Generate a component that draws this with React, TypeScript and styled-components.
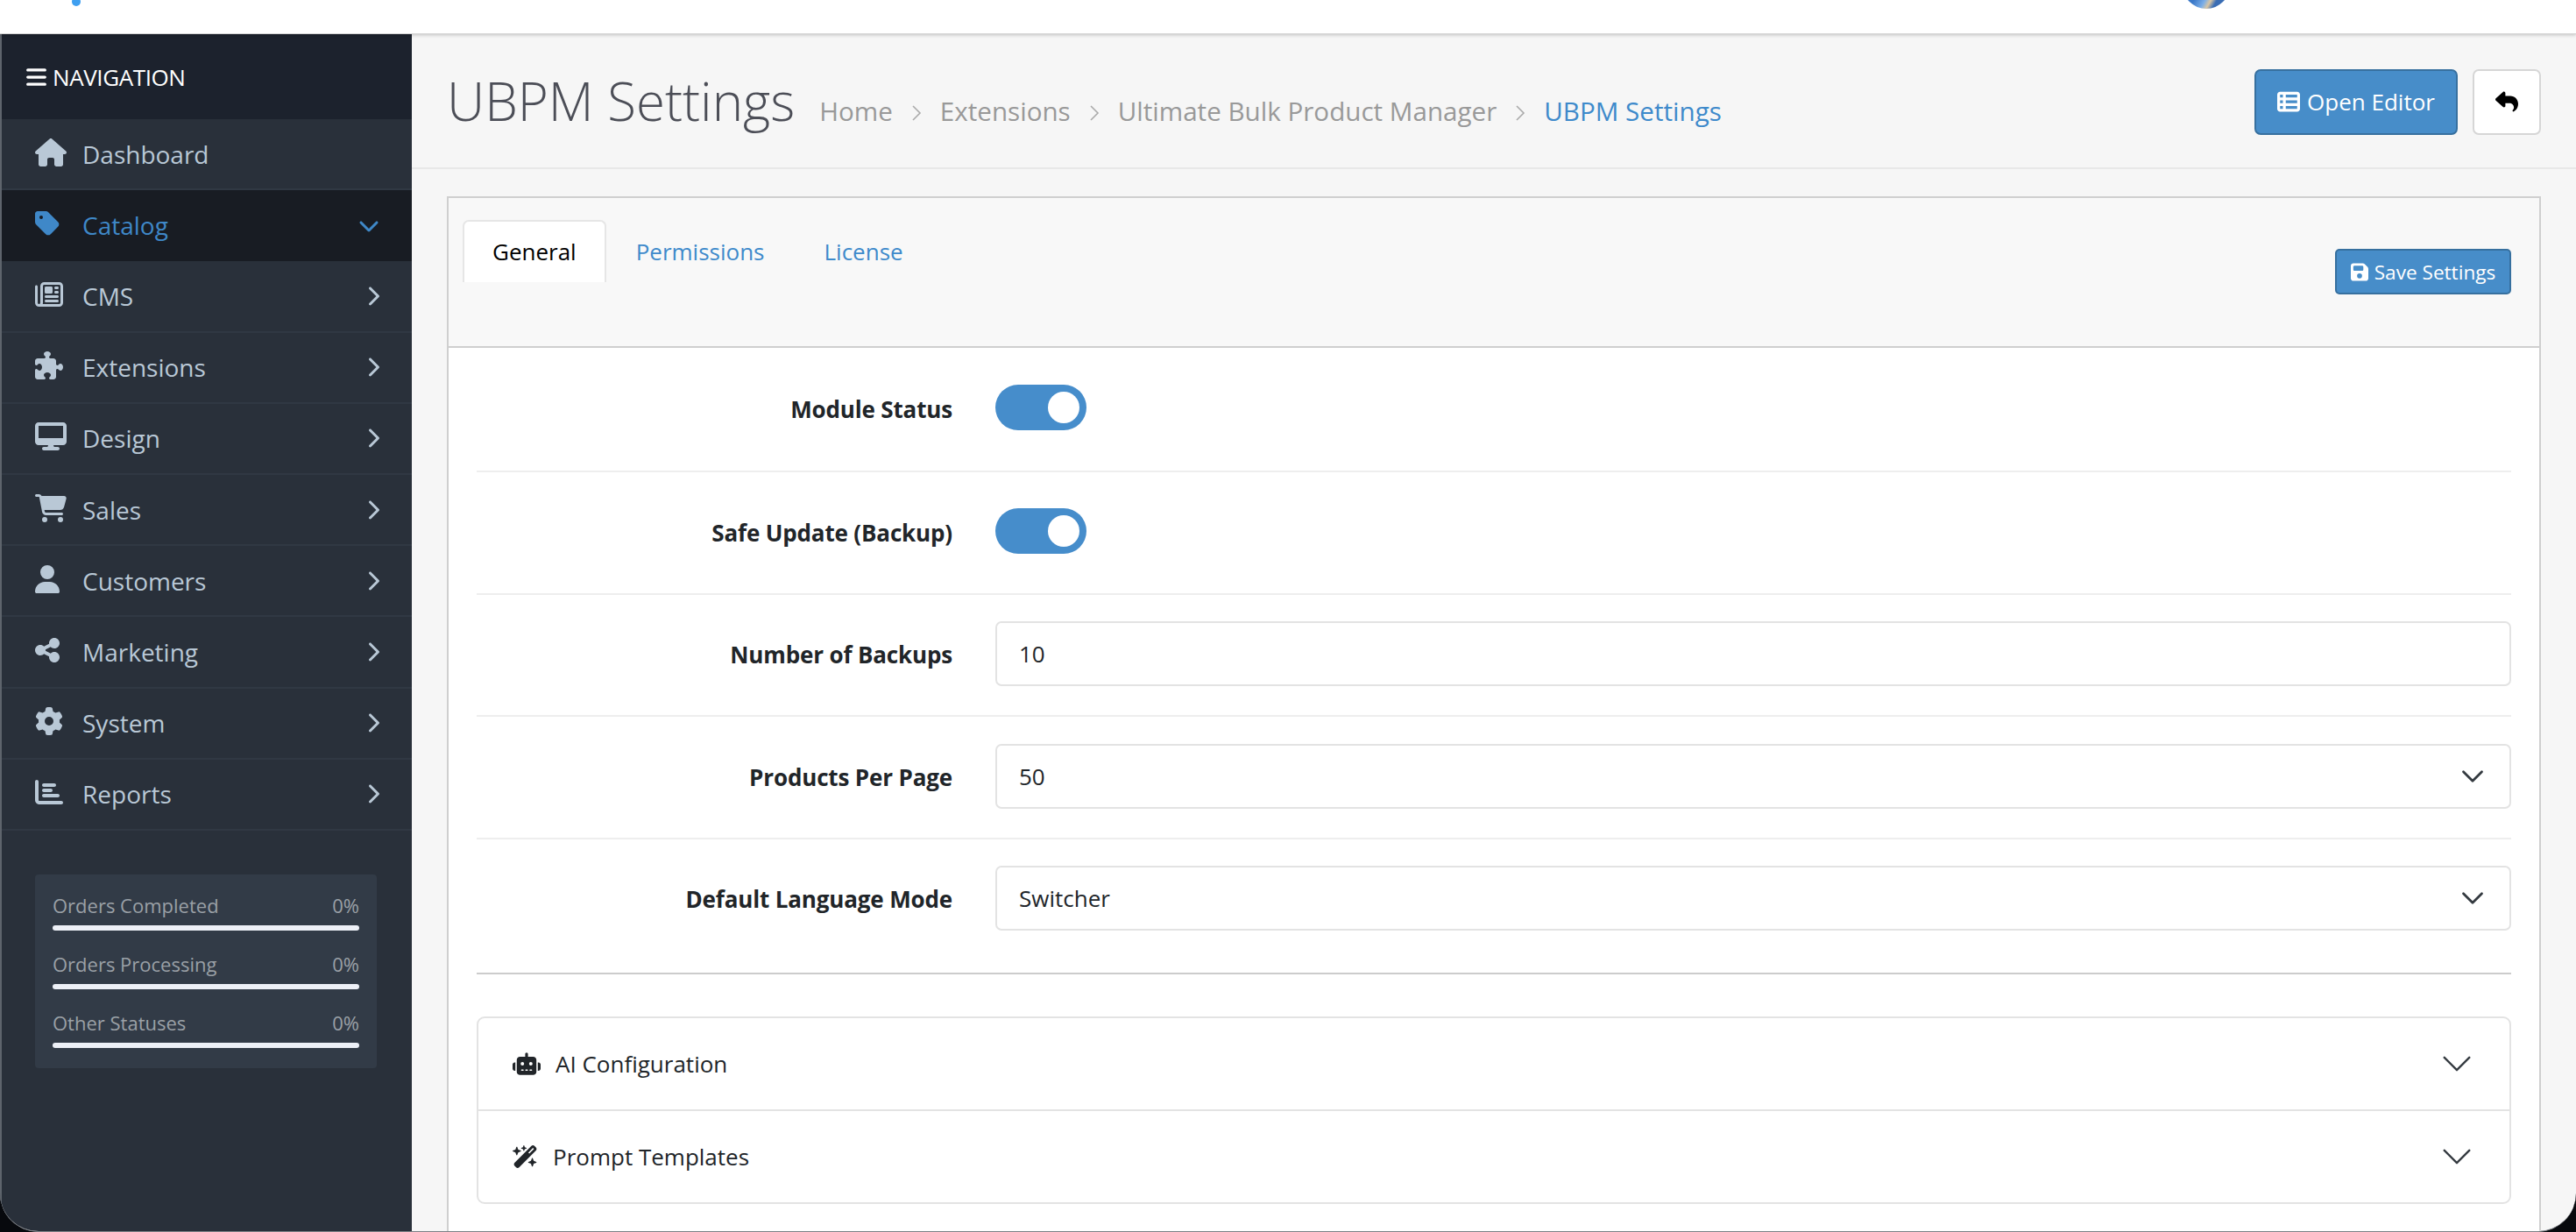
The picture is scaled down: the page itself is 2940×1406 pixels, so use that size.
import React from "react";
import styled, { createGlobalStyle } from "styled-components";
import {
  FaBars,
  FaCartShopping,
  FaChartBar,
  FaChevronDown,
  FaChevronRight,
  FaDesktop,
  FaFloppyDisk,
  FaGear,
  FaHouse,
  FaPuzzlePiece,
  FaRegNewspaper,
  FaReply,
  FaRobot,
  FaShareNodes,
  FaTableList,
  FaTag,
  FaUser,
  FaWandMagicSparkles,
} from "react-icons/fa6";

const GlobalStyle = createGlobalStyle`
  html, body {
    margin: 0;
    height: 100%;
    overflow: hidden;
    background: #07090d;
  }
  * { box-sizing: border-box; }
  body {
    font-family: "Open Sans", "Liberation Sans", sans-serif;
    font-size: 26px;
    color: #212529;
  }
`;

const Frame = styled.div`
  height: 100vh;
  display: flex;
  flex-direction: column;
  overflow: hidden;
  background: #f6f6f6;
  border-radius: 0 0 44px 44px;
  border-bottom: 1px solid #7d8186;
`;

const Header = styled.header`
  position: relative;
  z-index: 2;
  flex: 0 0 39px;
  display: flex;
  justify-content: space-between;
  padding: 0 395px 0 82px;
  background: #fff;
  border-bottom: 1px solid #d4d4d4;
  box-shadow: 0 1px 4px rgba(0, 0, 0, 0.22);
  overflow: hidden;
`;

const LogoDot = styled.span`
  width: 10px;
  height: 10px;
  margin-top: -3px;
  border-radius: 50%;
  background: #3f9ff0;
`;

const Avatar = styled.span`
  width: 54px;
  height: 54px;
  margin-top: -44px;
  border-radius: 50%;
  background: linear-gradient(120deg, #3a78c8 0 45%, #7aaee8 60%, #d9c6a4 68%, #3a6db4 76%);
`;

const Body = styled.div`
  flex: 1;
  min-height: 0;
  display: flex;
`;

const Sidebar = styled.aside`
  flex: 0 0 470px;
  display: flex;
  flex-direction: column;
  background: #29303a;
  border-left: 2px solid #5e646c;
`;

const NavHeading = styled.div`
  flex: 0 0 97px;
  display: flex;
  align-items: center;
  gap: 7px;
  padding-left: 28px;
  background: #1c222d;
  color: #fff;
  font-size: 26px;
  letter-spacing: -0.4px;

  svg {
    width: 23px;
    height: 26px;
  }
`;

const NavRow = styled.div<{ $active?: boolean }>`
  flex: 0 0 81.2px;
  display: flex;
  align-items: center;
  padding: 0 37px 0 38px;
  font-size: 28px;
  color: ${(p) => (p.$active ? "#3f88c8" : "#b9c8d6")};
  background: ${(p) => (p.$active ? "#181c23" : "transparent")};
  border-bottom: 2px solid ${(p) => (p.$active ? "#181c23" : "#303843")};
`;

const NavIcon = styled.span<{ $w: number }>`
  flex: 0 0 54px;
  display: flex;
  margin-top: -4px;

  svg {
    width: ${(p) => p.$w}px;
    height: 32px;
  }
`;

const NavLabel = styled.span`
  flex: 1;
`;

const NavArrow = styled.span<{ $w: number }>`
  display: flex;

  svg {
    width: ${(p) => p.$w}px;
    height: 24px;
  }
`;

const StatsBox = styled.div`
  margin: 50px 40px 0 38px;
  padding: 20px 20px 23px;
  display: flex;
  flex-direction: column;
  gap: 23px;
  background: #323b47;
  border-radius: 4px;
`;

const Stat = styled.div`
  display: flex;
  flex-direction: column;
  gap: 7px;
`;

const StatText = styled.div`
  display: flex;
  justify-content: space-between;
  font-size: 22px;
  line-height: 31px;
  color: #9aa0a6;
`;

const StatBar = styled.div`
  height: 6px;
  border-radius: 3px;
  background: #edf0f7;
`;

const Content = styled.main`
  flex: 1;
  min-width: 0;
  display: flex;
  flex-direction: column;
`;

const PageHeader = styled.div`
  flex: 0 0 154px;
  display: flex;
  align-items: center;
  justify-content: space-between;
  padding: 0 40px;
  border-bottom: 2px solid #e8e8e8;
`;

const TitleGroup = styled.div`
  display: flex;
  align-items: baseline;
  gap: 28px;
`;

const Title = styled.h1`
  margin: 0;
  font-size: 60px;
  font-weight: 300;
  line-height: 1.2;
  color: #4c4e57;
`;

const Breadcrumb = styled.nav`
  display: flex;
  align-items: center;
  gap: 21px;
  font-size: 29.6px;
  color: #999;
`;

const Crumb = styled.span<{ $current?: boolean }>`
  color: ${(p) => (p.$current ? "#3e8acb" : "#999")};
`;

const CrumbSep = styled.svg`
  width: 12px;
  height: 20px;
  margin-top: 5px;
  fill: none;
  stroke: #aaa;
  stroke-width: 1.6;
`;

const Actions = styled.div`
  display: flex;
  gap: 17px;
  margin-top: 2px;
`;

const PrimaryButton = styled.button<{ $small?: boolean }>`
  display: inline-flex;
  align-items: center;
  justify-content: center;
  gap: ${(p) => (p.$small ? "7px" : "8px")};
  width: ${(p) => (p.$small ? "201px" : "232px")};
  height: ${(p) => (p.$small ? "52px" : "75px")};
  padding: 0;
  font-family: inherit;
  font-size: ${(p) => (p.$small ? "22.6px" : "26px")};
  color: #fff;
  background: #478dc9;
  border: 2px solid #37709f;
  border-radius: ${(p) => (p.$small ? "5px" : "7px")};

  svg {
    width: ${(p) => (p.$small ? "20px" : "26px")};
    height: ${(p) => (p.$small ? "23px" : "26px")};
  }
`;

const BackButton = styled.button`
  width: 78px;
  height: 75px;
  display: flex;
  align-items: center;
  justify-content: center;
  padding: 0;
  color: #000;
  background: #fff;
  border: 2px solid #d6d6d6;
  border-radius: 7px;

  svg {
    width: 26px;
    height: 26px;
  }
`;

const Card = styled.section`
  flex: 1;
  min-height: 0;
  margin: 31px 40px 0;
  display: flex;
  flex-direction: column;
  background: #fff;
  border: solid #cfcfcf;
  border-width: 2px 2px 0;
`;

const CardHeader = styled.div`
  flex: 0 0 171px;
  display: flex;
  justify-content: space-between;
  padding: 25px 32px 0 16px;
  background: #f8f8f8;
  border-bottom: 2px solid #cfcfcf;
`;

const Tabs = styled.div`
  display: flex;
  align-items: flex-start;
`;

const Tab = styled.div<{ $active?: boolean }>`
  height: 71px;
  display: flex;
  align-items: center;
  padding: 0 32px 2px;
  font-size: 26px;
  color: ${(p) => (p.$active ? "#000" : "#3e8acb")};
  background: ${(p) => (p.$active ? "#fff" : "transparent")};
  border: 2px solid ${(p) => (p.$active ? "#e6e6e6" : "transparent")};
  border-bottom: 0;
  border-radius: 7px 7px 0 0;
`;

const SaveSlot = styled.div`
  padding-top: 33px;
`;

const CardBody = styled.div`
  padding: 0 32px;
`;

const FormRow = styled.div<{ $last?: boolean }>`
  height: ${(p) => (p.$last ? "137.4px" : "139.4px")};
  display: grid;
  grid-template-columns: 543px 1fr;
  gap: 49px;
  align-items: center;
  border-bottom: ${(p) => (p.$last ? "0" : "2px solid #eeeeee")};

  &:first-child {
    height: 142.4px;
    padding-bottom: 1px;
  }
`;

const Label = styled.label`
  text-align: right;
  font-size: 26px;
  font-weight: 700;
  letter-spacing: -0.15px;
  color: #212529;
`;

const Toggle = styled.span`
  width: 104px;
  height: 52px;
  margin-bottom: 4px;
  padding-right: 8px;
  display: flex;
  align-items: center;
  justify-content: flex-end;
  background: #468dcb;
  border-radius: 26px;
`;

const Knob = styled.span`
  width: 36px;
  height: 36px;
  border-radius: 50%;
  background: #fff;
`;

const Field = styled.div`
  height: 74px;
  margin-bottom: 2px;
  display: flex;
  align-items: center;
  justify-content: space-between;
  padding: 0 28px 0 25px;
  font-size: 26px;
  color: #212529;
  background: #fff;
  border: 2px solid #e3e3e3;
  border-radius: 7px;
`;

const Chevron = styled.svg<{ $size: number }>`
  width: ${(p) => p.$size}px;
  height: ${(p) => p.$size}px;
  fill: none;
  stroke: #343a40;
  stroke-linecap: round;
  stroke-linejoin: round;
`;

const Divider = styled.hr`
  margin: 15px 0 48px;
  border: 0;
  border-top: 2px solid #cccccc;
`;

const Accordion = styled.div`
  border: 2px solid #e3e3e3;
  border-radius: 9px;
`;

const AccordionItem = styled.div<{ $last?: boolean }>`
  height: ${(p) => (p.$last ? "104px" : "106px")};
  display: flex;
  align-items: center;
  padding: 0 41px 0 39px;
  font-size: 26px;
  color: #212529;
  border-bottom: ${(p) => (p.$last ? "0" : "2px solid #e3e3e3")};
`;

const AccordionIcon = styled.span<{ $w: number }>`
  display: flex;
  margin-right: 17px;

  svg {
    width: ${(p) => p.$w}px;
    height: 26px;
  }
`;

const AccordionTitle = styled.span`
  flex: 1;
`;

const navItems = [
  { label: "Dashboard", icon: <FaHouse />, w: 36 },
  { label: "Catalog", icon: <FaTag />, w: 28, active: true },
  { label: "CMS", icon: <FaRegNewspaper />, w: 32 },
  { label: "Extensions", icon: <FaPuzzlePiece />, w: 32 },
  { label: "Design", icon: <FaDesktop />, w: 36 },
  { label: "Sales", icon: <FaCartShopping />, w: 36 },
  { label: "Customers", icon: <FaUser />, w: 28 },
  { label: "Marketing", icon: <FaShareNodes />, w: 28 },
  { label: "System", icon: <FaGear />, w: 32 },
  { label: "Reports", icon: <FaChartBar />, w: 32 },
];

const stats = ["Orders Completed", "Orders Processing", "Other Statuses"];
const crumbs = ["Home", "Extensions", "Ultimate Bulk Product Manager"];

const SelectArrow = () => (
  <Chevron $size={28} viewBox="0 0 16 16" strokeWidth={1.6}>
    <path d="M2 5l6 6 6-6" />
  </Chevron>
);

const AccordionArrow = () => (
  <Chevron $size={38} viewBox="0 0 16 16" strokeWidth={1}>
    <path d="M2 5l6 6 6-6" />
  </Chevron>
);

const App: React.FC = () => {
  return (
    <Frame>
      <GlobalStyle />
      <Header>
        <LogoDot />
        <Avatar />
      </Header>
      <Body>
        <Sidebar>
          <NavHeading>
            <FaBars />
            NAVIGATION
          </NavHeading>
          {navItems.map((item, i) => (
            <NavRow key={item.label} $active={item.active}>
              <NavIcon $w={item.w}>{item.icon}</NavIcon>
              <NavLabel>{item.label}</NavLabel>
              {i > 0 && (
                <NavArrow $w={item.active ? 24 : 15}>
                  {item.active ? <FaChevronDown /> : <FaChevronRight />}
                </NavArrow>
              )}
            </NavRow>
          ))}
          <StatsBox>
            {stats.map((name) => (
              <Stat key={name}>
                <StatText>
                  <span>{name}</span>
                  <span>0%</span>
                </StatText>
                <StatBar />
              </Stat>
            ))}
          </StatsBox>
        </Sidebar>

        <Content>
          <PageHeader>
            <TitleGroup>
              <Title>UBPM Settings</Title>
              <Breadcrumb>
                {crumbs.map((c) => (
                  <React.Fragment key={c}>
                    <Crumb>{c}</Crumb>
                    <CrumbSep viewBox="0 0 12 20">
                      <path d="M2 2l8 8-8 8" />
                    </CrumbSep>
                  </React.Fragment>
                ))}
                <Crumb $current>UBPM Settings</Crumb>
              </Breadcrumb>
            </TitleGroup>
            <Actions>
              <PrimaryButton>
                <FaTableList />
                Open Editor
              </PrimaryButton>
              <BackButton>
                <FaReply />
              </BackButton>
            </Actions>
          </PageHeader>

          <Card>
            <CardHeader>
              <Tabs>
                <Tab $active>General</Tab>
                <Tab>Permissions</Tab>
                <Tab>License</Tab>
              </Tabs>
              <SaveSlot>
                <PrimaryButton $small>
                  <FaFloppyDisk />
                  Save Settings
                </PrimaryButton>
              </SaveSlot>
            </CardHeader>
            <CardBody>
              <FormRow>
                <Label>Module Status</Label>
                <Toggle>
                  <Knob />
                </Toggle>
              </FormRow>
              <FormRow>
                <Label>Safe Update (Backup)</Label>
                <Toggle>
                  <Knob />
                </Toggle>
              </FormRow>
              <FormRow>
                <Label>Number of Backups</Label>
                <Field>10</Field>
              </FormRow>
              <FormRow>
                <Label>Products Per Page</Label>
                <Field>
                  50
                  <SelectArrow />
                </Field>
              </FormRow>
              <FormRow $last>
                <Label>Default Language Mode</Label>
                <Field>
                  Switcher
                  <SelectArrow />
                </Field>
              </FormRow>
              <Divider />
              <Accordion>
                <AccordionItem>
                  <AccordionIcon $w={32}>
                    <FaRobot />
                  </AccordionIcon>
                  <AccordionTitle>AI Configuration</AccordionTitle>
                  <AccordionArrow />
                </AccordionItem>
                <AccordionItem $last>
                  <AccordionIcon $w={29}>
                    <FaWandMagicSparkles />
                  </AccordionIcon>
                  <AccordionTitle>Prompt Templates</AccordionTitle>
                  <AccordionArrow />
                </AccordionItem>
              </Accordion>
            </CardBody>
          </Card>
        </Content>
      </Body>
    </Frame>
  );
};

export default App;
